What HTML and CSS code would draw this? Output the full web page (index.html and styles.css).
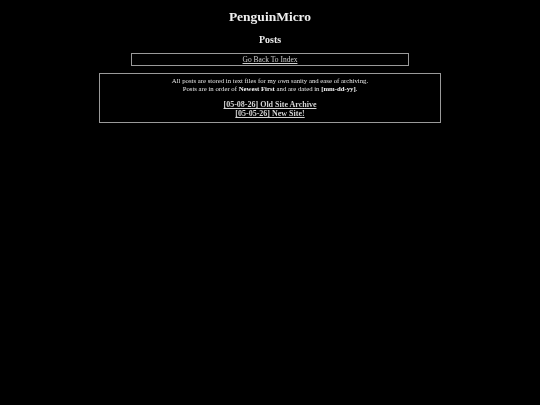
FILE: index.html
```html
<!DOCTYPE html>
<html>
<head>
<meta charset="utf-8">
<link rel="stylesheet" href="styles.css">
</head>
<body>
<div class="page">
  <h1 class="title">PenguinMicro</h1>
  <h2 class="subtitle">Posts</h2>
  <div class="back-box"><a href="#" class="back-link">Go Back To Index</a></div>
  <div class="posts-box">
    <p class="intro">All posts are stored in text files for my own sanity and ease of archiving.<br>Posts are in order of <b>Newest First</b> and are dated in <b>[mm-dd-yy]</b>.</p>
    <ul class="post-list">
      <li><a href="#" class="post-link">[05-08-26] Old Site Archive</a></li>
      <li><a href="#" class="post-link">[05-05-26] New Site!</a></li>
    </ul>
  </div>
</div>
</body>
</html>
```
FILE: styles.css
```css
html, body {
  margin: 0;
  padding: 0;
  background: #000;
}
body {
  font-family: "Liberation Serif", "Times New Roman", serif;
  color: #dcdcdc;
}
.page {
  display: flex;
  flex-direction: column;
  align-items: center;
  padding-top: 9px;
  will-change: transform;
  -webkit-font-smoothing: antialiased;
}
.title {
  margin: 0;
  font-size: 13.5px;
  line-height: 16px;
  font-weight: bold;
  color: #eeeeee;
}
.subtitle {
  margin: 9px 0 0;
  font-size: 10px;
  line-height: 12px;
  font-weight: bold;
  color: #eeeeee;
}
.back-box {
  margin-top: 7px;
  box-sizing: border-box;
  width: 278px;
  height: 13px;
  border: 1px solid #9a9a9a;
  text-align: center;
  font-size: 7.5px;
  line-height: 11px;
}
.back-link {
  color: #cfcfcf;
}
.posts-box {
  margin-top: 7px;
  box-sizing: border-box;
  width: 342px;
  height: 50px;
  border: 1px solid #9a9a9a;
  padding: 3px 0 0;
  text-align: center;
}
.intro {
  margin: 0;
  font-size: 6.75px;
  line-height: 8px;
  color: #e4e4e4;
}
.intro b {
  color: #f4f4f4;
}
.post-list {
  list-style: none;
  margin: 7px 0 0;
  padding: 0;
}
.post-list li {
  font-size: 8px;
  line-height: 9px;
}
.post-link {
  font-weight: bold;
  color: #d4d4d4;
}
```
